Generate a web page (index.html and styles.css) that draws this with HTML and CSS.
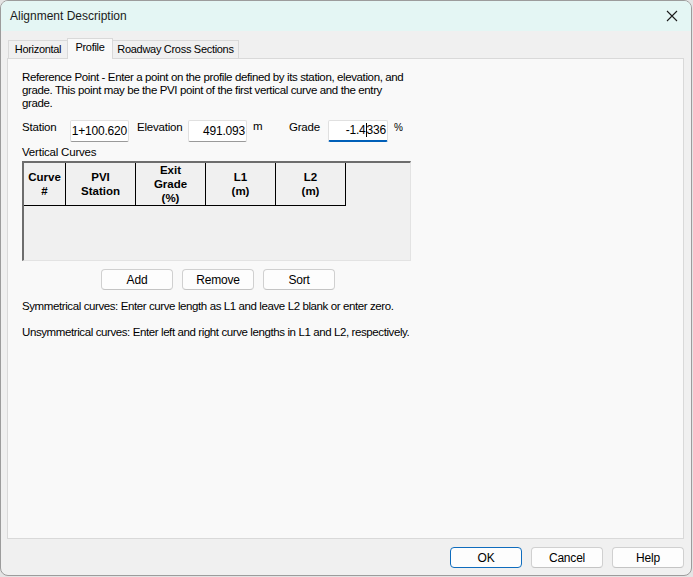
FILE: index.html
```
<!DOCTYPE html>
<html lang="en">
<head>
<meta charset="utf-8">
<title>Alignment Description</title>
<link rel="stylesheet" href="styles.css">
</head>
<body>
<div class="window">
  <div class="titlebar">
    <span class="title">Alignment Description</span>
    <svg class="close" width="12" height="12" viewBox="0 0 12 12"><path d="M1 1 L11 11 M11 1 L1 11" stroke="#1b1b1b" stroke-width="1.1" fill="none"/></svg>
  </div>
  <div class="client">
    <div class="tabs">
      <div class="tab tab-h">Horizontal</div>
      <div class="tab tab-p active">Profile</div>
      <div class="tab tab-r">Roadway Cross Sections</div>
    </div>
    <div class="panel">
      <p class="intro">Reference Point - Enter a point on the profile defined by its station, elevation, and<br>grade. This point may be the PVI point of the first vertical curve and the entry<br>grade.</p>
      <div class="fields">
        <span class="label lbl-station">Station</span>
        <span class="input w-station">1+100.620</span>
        <span class="label lbl-elev">Elevation</span>
        <span class="input w-elev">491.093</span>
        <span class="unit unit-m">m</span>
        <span class="label lbl-grade">Grade</span>
        <span class="input focused w-grade">-1.4<span class="caret"></span>336</span>
        <span class="unit unit-pct">%</span>
      </div>
      <div class="section-label">Vertical Curves</div>
      <div class="grid">
        <div class="grid-head">
          <div class="hcell c-curve">Curve<br>#</div>
          <div class="hcell c-pvi">PVI<br>Station</div>
          <div class="hcell c-exit">Exit<br>Grade<br>(%)</div>
          <div class="hcell c-l1">L1<br>(m)</div>
          <div class="hcell c-l2">L2<br>(m)</div>
        </div>
      </div>
      <div class="grid-buttons">
        <button class="btn">Add</button>
        <button class="btn">Remove</button>
        <button class="btn">Sort</button>
      </div>
      <p class="note note-sym">Symmetrical curves: Enter curve length as L1 and leave L2 blank or enter zero.</p>
      <p class="note note-unsym">Unsymmetrical curves: Enter left and right curve lengths in L1 and L2, respectively.</p>
    </div>
    <div class="footer">
      <button class="btn default">OK</button>
      <button class="btn">Cancel</button>
      <button class="btn">Help</button>
    </div>
  </div>
</div>
</body>
</html>
```
FILE: styles.css
```
* { box-sizing: border-box; }
html, body { margin: 0; padding: 0; }
body {
  background: #e4e4e4;
  width: 693px;
  height: 577px;
  overflow: hidden;
  font-family: "Liberation Sans", Arial, sans-serif;
  font-size: 11.5px;
  color: #000;
}
.window {
  width: 692px;
  height: 576px;
  border: 1px solid #9c9c9c;
  border-radius: 8px;
  overflow: hidden;
  background: #f0f0f0;
  display: flex;
  flex-direction: column;
}
.titlebar {
  height: 30px;
  flex: none;
  background: #e4f6f4;
  display: flex;
  align-items: center;
  justify-content: space-between;
  padding: 0 13px 1px 9px;
}
.title {
  font-size: 12px;
  color: #1a1a1a;
}
.close { display: block; }
.client {
  flex: 1;
  display: flex;
  flex-direction: column;
  padding: 7px 6px 0 6px;
}
.tabs {
  display: flex;
  align-items: flex-end;
  height: 20px;
  padding-left: 1px;
}
.tab {
  height: 18px;
  border: 1px solid #d9d9d9;
  border-bottom: none;
  background: #f0f0f0;
  line-height: 17px;
  font-size: 11px;
  letter-spacing: -0.3px;
  text-align: center;
  color: #000;
}
.tab + .tab { margin-left: -1px; }
.tab-h { width: 60px; }
.tab-p { width: 46px; }
.tab-r { width: 127px; }
.tab.active {
  background: #f9f9f9;
  position: relative;
  z-index: 1;
  line-height: 17px;
  margin-bottom: -1px;
  height: 21px;
}
.panel {
  width: 677px;
  height: 481px;
  border: 1px solid #d9d9d9;
  background: #f9f9f9;
  padding: 12px 0 0 14px;
  flex: none;
}
.intro {
  margin: 0;
  line-height: 13px;
  letter-spacing: -0.38px;
}
.fields {
  display: flex;
  align-items: center;
  height: 22px;
  margin-top: 10px;
}
.label, .unit { letter-spacing: -0.2px; }
.lbl-station { width: 48px; margin-top: -8px; }
.input {
  display: inline-block;
  height: 22px;
  background: #fff;
  border: 1px solid #e0e0e0;
  border-bottom-color: #9a9a9a;
  border-radius: 2px;
  text-align: right;
  line-height: 20px;
  padding-right: 1px;
  font-size: 12px;
  letter-spacing: -0.2px;
}
.w-station { width: 59px; }
.lbl-elev { margin-left: 8px; width: 51px; margin-top: -8px; }
.w-elev { width: 59px; }
.unit-m { margin-left: 6px; width: 36px; margin-top: -10px; }
.lbl-grade { width: 39px; margin-top: -8px; }
.w-grade { width: 60px; }
.focused {
  border-bottom: 2px solid #005fb8;
  line-height: 19px;
}
.caret {
  display: inline-block;
  width: 1px;
  height: 14px;
  background: #000;
  vertical-align: -3px;
}
.unit-pct { margin-left: 6px; font-size: 10px; margin-top: -8px; }
.section-label {
  margin-top: 3px;
  line-height: 14px;
  letter-spacing: -0.2px;
}
.grid {
  margin-top: 2px;
  width: 389px;
  height: 100px;
  background: #f0f0f0;
  border-top: 2px solid #6d6d6d;
  border-left: 2px solid #6d6d6d;
  border-right: 1px solid #e3e3e3;
  border-bottom: 1px solid #e3e3e3;
}
.grid-head {
  display: flex;
  height: 43px;
}
.hcell {
  border-right: 1px solid #000;
  border-bottom: 1px solid #000;
  display: flex;
  align-items: center;
  justify-content: center;
  text-align: center;
  font-weight: bold;
  font-size: 11.5px;
  line-height: 14px;
  background: #f0f0f0;
}
.c-curve { width: 42px; }
.c-pvi { width: 70px; }
.c-exit { width: 70px; }
.c-l1 { width: 70px; }
.c-l2 { width: 70px; }
.grid-buttons {
  display: flex;
  gap: 9px;
  margin: 8px 0 0 79px;
}
.btn {
  width: 72px;
  height: 21px;
  padding: 0;
  font-family: inherit;
  font-size: 12px;
  letter-spacing: -0.2px;
  color: #000;
  background: #fdfdfd;
  border: 1px solid #d0d0d0;
  border-bottom-color: #c4c4c4;
  border-radius: 4px;
}
.note {
  margin: 0;
  line-height: 14px;
  letter-spacing: -0.4px;
}
.note-sym { margin-top: 9px; }
.note-unsym { margin-top: 12px; }
.footer {
  display: flex;
  justify-content: flex-end;
  gap: 9px;
  padding: 8px 1px 0 0;
}
.btn.default {
  border: 1px solid #0f6cbd;
}
```
